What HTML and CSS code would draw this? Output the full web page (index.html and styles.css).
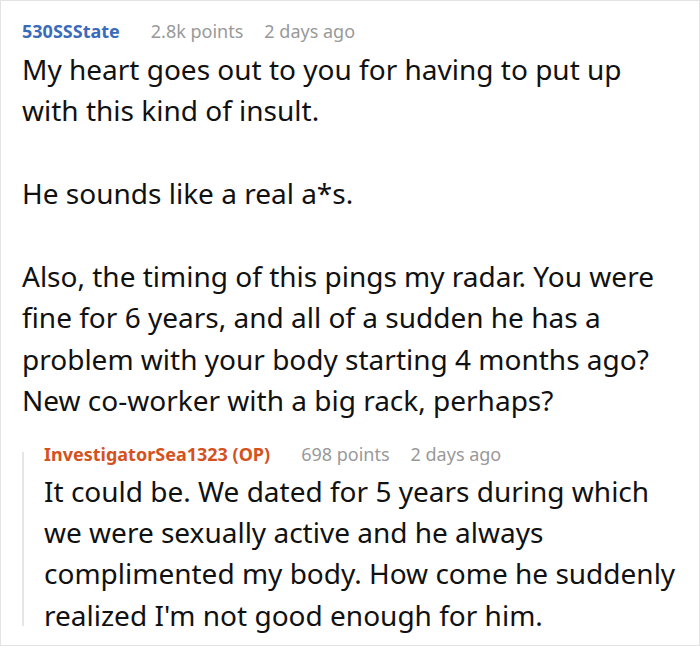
FILE: index.html
```html
<!DOCTYPE html>
<html>
<head>
<meta charset="utf-8">
<link rel="stylesheet" href="styles.css">
</head>
<body>
<div class="frame">
  <div class="comment">
    <div class="meta">
      <span class="user">530SSState</span>
      <span class="points">2.8k points</span>
      <span class="time">2 days ago</span>
    </div>
    <div class="text">
      <p>My heart goes out to you for having to put up<br>with this kind of insult.</p>
      <p>He sounds like a real a*s.</p>
      <p>Also, the timing of this pings my radar. You were<br>fine for 6 years, and all of a sudden he has a<br>problem with your body starting 4 months ago?<br>New co-worker with a big rack, perhaps?</p>
    </div>
    <div class="reply">
      <div class="meta">
        <span class="user op">InvestigatorSea1323 (OP)</span>
        <span class="points">698 points</span>
        <span class="time">2 days ago</span>
      </div>
      <div class="text">
        <p>It could be. We dated for 5 years during which<br>we were sexually active and he always<br>complimented my body. How come he suddenly<br>realized I'm not good enough for him.</p>
      </div>
    </div>
  </div>
</div>
</body>
</html>
```

FILE: styles.css
```css
html, body {
  margin: 0;
  padding: 0;
  background: #fff;
}
.frame {
  box-sizing: border-box;
  width: 700px;
  height: 646px;
  border: 1px solid #e3e3e3;
  overflow: hidden;
  font-family: "Noto Sans", "Open Sans", sans-serif;
  color: #111;
}
.comment {
  padding: 15px 0 0 21px;
}
.meta {
  display: flex;
  align-items: center;
  height: 30px;
  font-size: 18px;
  line-height: 30px;
  margin-bottom: 3px;
  white-space: nowrap;
}
.user {
  font-weight: bold;
  color: #3a6bbb;
  margin-right: 31px;
}
.user.op {
  color: #d4521d;
}
.points {
  color: #999;
  margin-right: 21px;
}
.time {
  color: #999;
}
.text {
  font-size: 28px;
  line-height: 41.4px;
  white-space: nowrap;
}
.text p {
  margin: 0 0 41.4px 0;
}
.text p:last-child {
  margin-bottom: 0;
}
.reply {
  margin-top: 17px;
  padding-left: 22px;
  background: linear-gradient(#e6e6e6, #e6e6e6) no-repeat 0 13px / 2px calc(100% - 23px);
}
.reply .meta {
  margin-bottom: 2px;
}
```
